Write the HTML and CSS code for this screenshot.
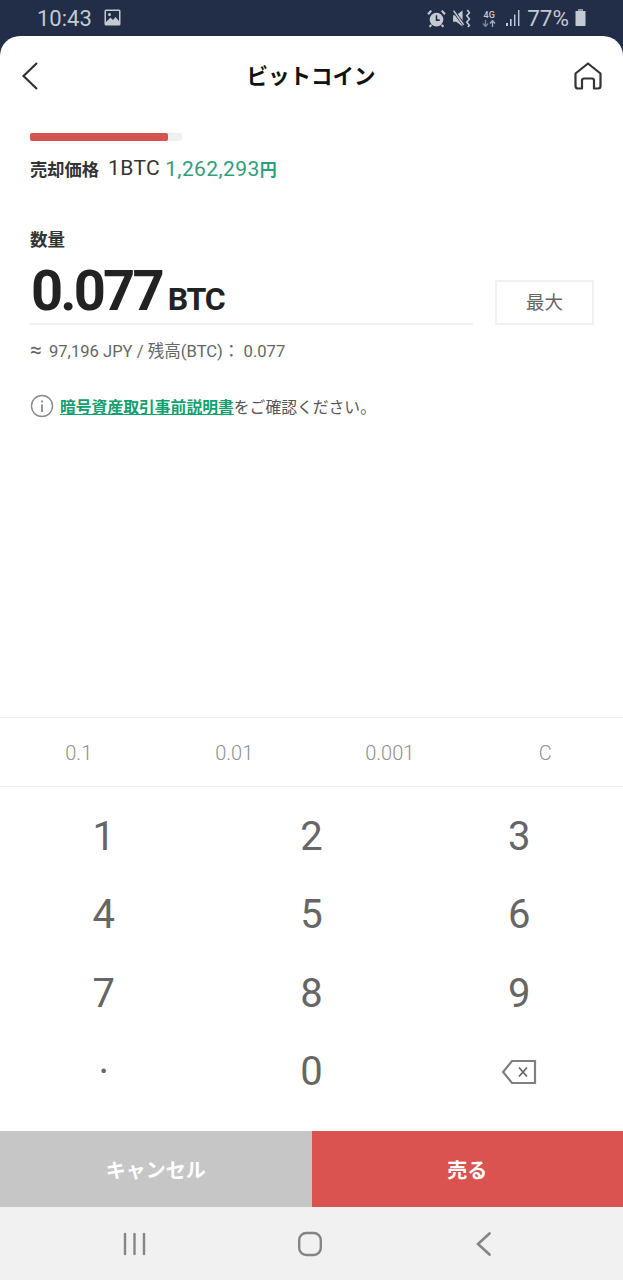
FILE: index.html
```html
<!DOCTYPE html>
<html lang="ja">
<head>
    <meta charset="UTF-8">
    <meta name="viewport" content="width=device-width, initial-scale=1.0">
    <title>ビットコイン</title>
    <link rel="stylesheet" href="styles.css">
</head>
<body>

    <!-- Status Bar -->
    <div class="status-bar">
        <div class="status-left">
            <span class="clock">10:43</span>
            <svg class="status-icon" width="17" height="17" viewBox="0 0 17 17">
                <rect x="0.5" y="0.5" width="16" height="16" rx="1.5" fill="#c5c9d2"/>
                <rect x="2" y="2" width="13" height="13" fill="#222d47"/>
                <circle cx="5.5" cy="5.5" r="1.5" fill="#c5c9d2"/>
                <path d="M2 13 L6.5 8.5 L9 11 L11.5 8 L15 12 V15 H2 Z" fill="#c5c9d2"/>
            </svg>
        </div>
        <div class="status-right">
            <svg width="19" height="19" viewBox="0 0 18 18">
                <circle cx="9" cy="10" r="6.5" fill="#c5c9d2"/>
                <path d="M9 6 V10.5 H12" fill="none" stroke="#222d47" stroke-width="1.5"/>
                <path d="M1 5 L4 1.5 M17 5 L14 1.5 M4 15 L2.5 17 M14 15 L15.5 17" stroke="#c5c9d2" stroke-width="2"/>
            </svg>
            <svg class="icon-vibrate" width="19" height="19" viewBox="0 0 18 18">
                <path d="M1 6 H4 L10 1.5 V16.5 L4 12 H1 Z" fill="#c5c9d2"/>
                <path d="M0.5 0.5 L12 16" stroke="#222d47" stroke-width="3"/>
                <path d="M1.5 1.5 L11 15" stroke="#c5c9d2" stroke-width="1.5"/>
                <path d="M14.5 1 L16.5 3.5 L14 6.5 L16.5 9.5 L14 12.5 L16.5 15.5 L15 17" fill="none" stroke="#c5c9d2" stroke-width="1.5"/>
            </svg>
            <div class="net">
                <span class="net-label">4G</span>
                <svg width="14" height="7" viewBox="0 0 14 7">
                    <path d="M3.5 0 V6 M1 3.5 L3.5 6.5 L6 3.5" fill="none" stroke="#7f8698" stroke-width="1.3"/>
                    <path d="M10.5 7 V1 M8 3.5 L10.5 0.5 L13 3.5" fill="none" stroke="#a7acb9" stroke-width="1.3"/>
                </svg>
            </div>
            <svg class="icon-signal" width="14" height="16" viewBox="0 0 14 16">
                <rect x="0" y="13" width="2" height="3" fill="#c5c9d2"/>
                <rect x="4" y="9" width="1.6" height="7" fill="#c5c9d2"/>
                <rect x="8" y="4.5" width="1.4" height="11.5" fill="#c5c9d2"/>
                <rect x="12" y="0" width="1.4" height="16" fill="#c5c9d2"/>
            </svg>
            <span class="battery-text">77%</span>
            <svg width="13" height="18" viewBox="0 0 12 18">
                <rect x="3.5" y="0" width="5" height="3" fill="#8f95a5"/>
                <rect x="1" y="2" width="10" height="15" rx="0.5" fill="#c5c9d2"/>
            </svg>
        </div>
    </div>

    <!-- Main Sheet -->
    <main class="sheet">
        <header class="top-bar">
            <svg class="nav-icon" width="18" height="30" viewBox="0 0 18 30">
                <path d="M16 2 L2.5 15 L16 28" fill="none" stroke="#333" stroke-width="2.2"/>
            </svg>
            <h1>ビットコイン</h1>
            <svg class="nav-icon" width="30" height="30" viewBox="0 0 30 30">
                <path d="M9 27.5 H5 Q2.5 27.5 2.5 25 V12.5 L15 2.5 L27.5 12.5 V25 Q27.5 27.5 25 27.5 H21 V19.5 Q21 17.5 19 17.5 H11 Q9 17.5 9 19.5 Z" fill="none" stroke="#333" stroke-width="2.2" stroke-linejoin="round"/>
            </svg>
        </header>

        <section class="content">
            <div class="progress">
                <div class="progress-fill" style="width: 91%"></div>
            </div>
            <p class="price-row">
                <strong class="price-label">売却価格</strong>
                <span class="price-unit">1BTC</span>
                <span class="price-value">1,262,293<b>円</b></span>
            </p>

            <h2 class="qty-label">数量</h2>
            <div class="qty-row">
                <div class="qty-input">
                    <span class="qty-number">0.077</span>
                    <span class="qty-unit">BTC</span>
                </div>
                <button class="max-btn">最大</button>
            </div>
            <p class="balance"><span class="approx">≈</span> 97,196 JPY / 残高(BTC)： 0.077</p>

            <p class="notice">
                <svg width="24" height="24" viewBox="0 0 24 24">
                    <circle cx="12" cy="12" r="10.5" fill="none" stroke="#8a8a8a" stroke-width="1.4"/>
                    <rect x="11.2" y="6.5" width="1.6" height="2" fill="#777"/>
                    <rect x="11.2" y="10.5" width="1.6" height="7.5" fill="#777"/>
                </svg>
                <span><a class="doc-link">暗号資産取引事前説明書</a>をご確認ください。</span>
            </p>
        </section>

        <!-- Keypad -->
        <div class="shortcuts">
            <span>0.1</span>
            <span>0.01</span>
            <span>0.001</span>
            <span>C</span>
        </div>
        <div class="keypad">
            <span>1</span>
            <span>2</span>
            <span>3</span>
            <span>4</span>
            <span>5</span>
            <span>6</span>
            <span>7</span>
            <span>8</span>
            <span>9</span>
            <span class="key-dot">·</span>
            <span>0</span>
            <span>
                <svg width="36" height="26" viewBox="0 0 36 26">
                    <path d="M34 2 H11 L2 13 L11 24 H34 Z" fill="none" stroke="#808080" stroke-width="2.2"/>
                    <path d="M18 8.5 L26 17.5 M26 8.5 L18 17.5" stroke="#666" stroke-width="1.8"/>
                </svg>
            </span>
        </div>

        <div class="actions">
            <button class="btn-cancel">キャンセル</button>
            <button class="btn-sell">売る</button>
        </div>
    </main>

    <!-- Android Navigation -->
    <nav class="system-nav">
        <svg width="24" height="24" viewBox="0 0 24 24">
            <path d="M2 2 V22 M11.5 2 V22 M21 2 V22" stroke="#858585" stroke-width="2.4" stroke-linecap="round"/>
        </svg>
        <svg width="26" height="26" viewBox="0 0 26 26">
            <rect x="1.2" y="2" width="21.6" height="22" rx="7" fill="none" stroke="#858585" stroke-width="2.4"/>
        </svg>
        <svg width="16" height="26" viewBox="0 0 16 26">
            <path d="M14.5 2.5 L3 13 L14.5 23.5" fill="none" stroke="#858585" stroke-width="2.6" stroke-linecap="round"/>
        </svg>
    </nav>

</body>
</html>
```

FILE: styles.css
```css
/* Basic Reset */
* {
    margin: 0;
    padding: 0;
    box-sizing: border-box;
}

body {
    font-family: 'Roboto', 'Noto Sans CJK JP', sans-serif;
    width: 623px;
    height: 1280px;
    display: flex;
    flex-direction: column;
    background-color: #222d47;
    color: #222;
    overflow: hidden;
}

/* Status Bar */
.status-bar {
    height: 36px;
    flex: none;
    display: flex;
    justify-content: space-between;
    align-items: center;
    padding: 0 36px 0 37px;
    color: #c5c9d2;
}

.status-left,
.status-right {
    display: flex;
    align-items: center;
}

.clock {
    font-size: 22px;
    margin-right: 12px;
}

.status-icon {
    margin-top: -2px;
}

.icon-vibrate {
    margin-left: 6px;
}

.net {
    display: flex;
    flex-direction: column;
    align-items: center;
    width: 16px;
    margin-left: 10px;
    margin-right: 9px;
}

.net-label {
    font-size: 9px;
    line-height: 10px;
    font-weight: 500;
}

.battery-text {
    font-size: 22.5px;
    margin-left: 7px;
    margin-right: 5px;
}

/* Main Sheet */
.sheet {
    flex: 1;
    min-height: 0;
    display: flex;
    flex-direction: column;
    background-color: #fff;
    border-radius: 20px 20px 0 0;
}

.top-bar {
    height: 80px;
    flex: none;
    display: flex;
    justify-content: space-between;
    align-items: center;
    padding: 0 20px 0 21px;
}

.top-bar h1 {
    font-size: 21.5px;
    line-height: 28px;
    font-weight: 700;
    color: #111;
    margin-left: 10px;
    margin-top: 2px;
}

.content {
    flex: 1;
    padding: 17px 29px 0 30px;
}

/* Progress */
.progress {
    width: 152px;
    height: 8px;
    background-color: #f1f1f1;
    border-radius: 2px;
}

.progress-fill {
    height: 100%;
    background-color: #d55351;
    border-radius: 2px;
}

.price-row {
    display: flex;
    align-items: center;
    height: 24px;
    margin-top: 15px;
}

.price-label {
    font-size: 17.25px;
    font-weight: 700;
    color: #333;
}

.price-unit {
    font-size: 21px;
    letter-spacing: 0.4px;
    color: #333;
    margin-left: 9px;
}

.price-value {
    font-size: 21px;
    letter-spacing: 0.4px;
    color: #2f9e7c;
    margin-left: 5px;
}

.price-value b {
    font-size: 17px;
}

/* Quantity */
.qty-label {
    font-size: 17.5px;
    font-weight: 700;
    color: #333;
    line-height: 24px;
    margin-top: 48px;
}

.qty-row {
    display: flex;
    justify-content: space-between;
    align-items: flex-end;
    margin-top: 12px;
}

.qty-input {
    width: 443px;
    height: 61px;
    display: flex;
    align-items: baseline;
    border-bottom: 2px solid #f1f1f1;
}

.qty-number {
    font-size: 56px;
    line-height: 54px;
    font-weight: 700;
    letter-spacing: -2.8px;
    color: #222;
    margin-left: 1px;
}

.qty-unit {
    font-size: 32px;
    font-weight: 700;
    letter-spacing: -1.2px;
    color: #222;
    margin-left: 6px;
}

.max-btn {
    width: 99px;
    height: 45px;
    background-color: #fff;
    border: 2px solid #f1f1f1;
    font-family: inherit;
    font-size: 18.5px;
    padding-bottom: 3px;
    color: #666;
}

.balance {
    font-size: 16.6px;
    line-height: 22px;
    color: #666;
    margin-top: 15px;
}

.approx {
    font-size: 21px;
    line-height: 20px;
    margin-right: 3px;
}

.notice {
    display: flex;
    align-items: center;
    gap: 6px;
    font-size: 15.8px;
    color: #555;
    margin-top: 31px;
}

.doc-link {
    color: #12a06e;
    font-weight: 700;
    text-decoration: underline;
}

/* Keypad */
.shortcuts {
    height: 70px;
    flex: none;
    display: grid;
    grid-template-columns: repeat(4, 1fr);
    align-items: center;
    text-align: center;
    font-size: 20px;
    font-weight: 300;
    color: #8f8f8f;
    border-top: 1px solid #eee;
    border-bottom: 1px solid #eee;
    padding: 1px 0 0 1px;
}

.keypad {
    flex: none;
    display: grid;
    grid-template-columns: repeat(3, 1fr);
    grid-auto-rows: 78.5px;
    align-items: center;
    text-align: center;
    font-size: 40px;
    color: #666;
    padding: 10px 0 20px;
}

.keypad span {
    display: flex;
    justify-content: center;
    align-items: center;
}

/* Action Buttons */
.actions {
    height: 76px;
    flex: none;
    display: flex;
}

.actions button {
    flex: 1;
    border: none;
    font-family: inherit;
    font-size: 20px;
    font-weight: 700;
    color: #fff;
}

.btn-cancel {
    background-color: #c6c6c6;
}

.btn-sell {
    background-color: #da5350;
}

/* Android Navigation */
.system-nav {
    height: 73px;
    flex: none;
    display: flex;
    justify-content: space-between;
    align-items: center;
    padding: 0 132px 0 123px;
    background-color: #f1f1f1;
}
```
